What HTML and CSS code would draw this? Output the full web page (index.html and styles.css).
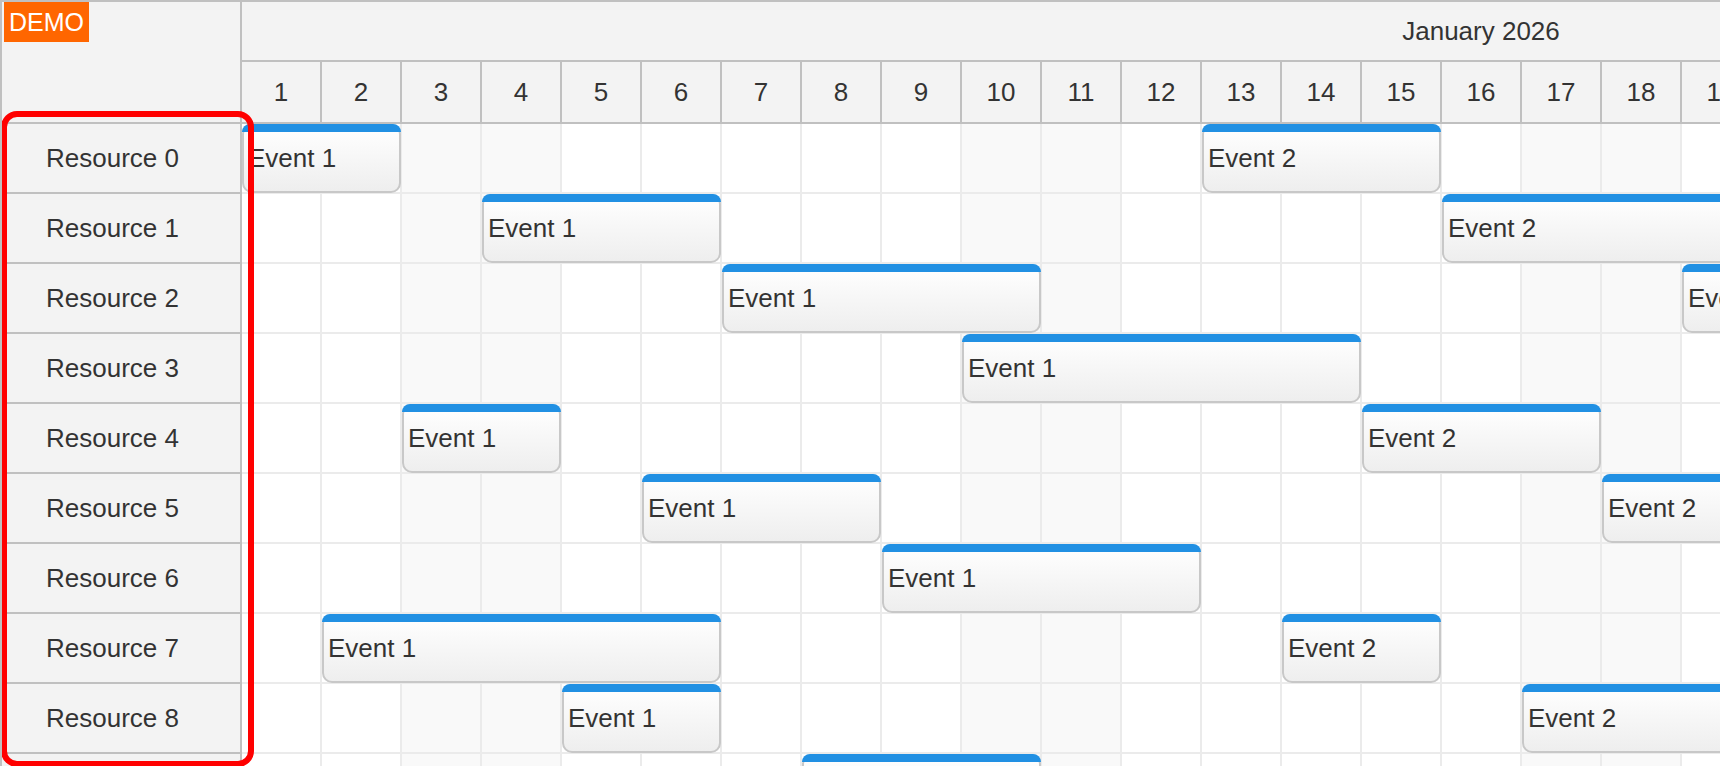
FILE: index.html
```html
<!DOCTYPE html>
<html>
<head>
<meta charset="utf-8">
<title>Scheduler</title>
<link rel="stylesheet" href="styles.css">
</head>
<body>
<div class="scheduler">
  <div class="corner"><span class="demo">DEMO</span></div>
  <div class="timeheader">
    <div class="month-row"><div class="month">January 2026</div></div>
    <div class="day-row">
      <div class="day">1</div><div class="day">2</div><div class="day">3</div><div class="day">4</div>
      <div class="day">5</div><div class="day">6</div><div class="day">7</div><div class="day">8</div>
      <div class="day">9</div><div class="day">10</div><div class="day">11</div><div class="day">12</div>
      <div class="day">13</div><div class="day">14</div><div class="day">15</div><div class="day">16</div>
      <div class="day">17</div><div class="day">18</div><div class="day">19</div><div class="day">20</div>
      <div class="day">21</div><div class="day">22</div>
    </div>
  </div>
  <div class="rowheader">
    <div class="res">Resource 0</div>
    <div class="res">Resource 1</div>
    <div class="res">Resource 2</div>
    <div class="res">Resource 3</div>
    <div class="res">Resource 4</div>
    <div class="res">Resource 5</div>
    <div class="res">Resource 6</div>
    <div class="res">Resource 7</div>
    <div class="res">Resource 8</div>
    <div class="res">Resource 9</div>
  </div>
  <div class="grid">
    <div class="row">
      <div class="event" style="left:0px;width:159px">Event 1</div>
      <div class="event" style="left:960px;width:239px">Event 2</div>
    </div>
    <div class="row">
      <div class="event" style="left:240px;width:239px">Event 1</div>
      <div class="event" style="left:1200px;width:399px">Event 2</div>
    </div>
    <div class="row">
      <div class="event" style="left:480px;width:319px">Event 1</div>
      <div class="event" style="left:1440px;width:319px">Event 2</div>
    </div>
    <div class="row">
      <div class="event" style="left:720px;width:399px">Event 1</div>
    </div>
    <div class="row">
      <div class="event" style="left:160px;width:159px">Event 1</div>
      <div class="event" style="left:1120px;width:239px">Event 2</div>
    </div>
    <div class="row">
      <div class="event" style="left:400px;width:239px">Event 1</div>
      <div class="event" style="left:1360px;width:319px">Event 2</div>
    </div>
    <div class="row">
      <div class="event" style="left:640px;width:319px">Event 1</div>
    </div>
    <div class="row">
      <div class="event" style="left:80px;width:399px">Event 1</div>
      <div class="event" style="left:1040px;width:159px">Event 2</div>
    </div>
    <div class="row">
      <div class="event" style="left:320px;width:159px">Event 1</div>
      <div class="event" style="left:1280px;width:319px">Event 2</div>
    </div>
    <div class="row">
      <div class="event" style="left:560px;width:239px">Event 1</div>
    </div>
  </div>
  <div class="highlight"></div>
</div>
</body>
</html>
```
FILE: styles.css
```css
html, body {
  margin: 0;
  padding: 0;
  background: #ffffff;
}
body {
  font-family: "Liberation Sans", Arial, sans-serif;
  font-size: 26px;
  color: #333333;
}
.scheduler {
  position: relative;
  box-sizing: border-box;
  width: 1720px;
  height: 766px;
  overflow: hidden;
  border-top: 2px solid #c0c0c0;
  border-left: 2px solid #c0c0c0;
  display: grid;
  grid-template-columns: 240px minmax(0, 1fr);
  grid-template-rows: 122px minmax(0, 1fr);
}
.corner {
  position: relative;
  box-sizing: border-box;
  background: #f3f3f3;
  border-right: 2px solid #c0c0c0;
  border-bottom: 2px solid #c0c0c0;
}
.demo {
  position: absolute;
  left: 2px;
  top: 0;
  height: 40px;
  line-height: 40px;
  padding: 0 5px;
  background: #ff6600;
  color: #ffffff;
  font-size: 25px;
}
.timeheader {
  overflow: hidden;
  background: #f3f3f3;
}
.month-row {
  box-sizing: border-box;
  height: 60px;
  border-bottom: 2px solid #c0c0c0;
  display: flex;
}
.month {
  flex: 0 0 2480px;
  box-sizing: border-box;
  border-right: 2px solid #c0c0c0;
  display: flex;
  align-items: center;
  justify-content: center;
}
.day-row {
  box-sizing: border-box;
  height: 62px;
  border-bottom: 2px solid #c0c0c0;
  display: flex;
}
.day {
  flex: 0 0 80px;
  box-sizing: border-box;
  border-right: 2px solid #c0c0c0;
  display: flex;
  align-items: center;
  justify-content: center;
}
.rowheader {
  overflow: hidden;
}
.res {
  box-sizing: border-box;
  height: 70px;
  padding-left: 44px;
  background: #f3f3f3;
  border-right: 2px solid #c0c0c0;
  border-bottom: 2px solid #c0c0c0;
  display: flex;
  align-items: center;
  white-space: nowrap;
}
.grid {
  overflow: hidden;
}
.row {
  position: relative;
  box-sizing: border-box;
  width: 2480px;
  height: 70px;
  border-bottom: 2px solid #ebebeb;
  background:
    repeating-linear-gradient(to right, transparent 0 78px, #ebebeb 78px 80px),
    repeating-linear-gradient(to right, #ffffff 0 160px, #f9f9f9 160px 320px, #ffffff 320px 560px);
}
.event {
  position: absolute;
  top: 0;
  height: 69px;
  box-sizing: border-box;
  border: 2px solid #c8c8c8;
  border-radius: 10px;
  background: linear-gradient(to bottom, #ffffff, #eeeeee);
  padding-left: 4px;
  display: flex;
  align-items: center;
  white-space: nowrap;
  color: #333333;
}
.event::before {
  content: "";
  position: absolute;
  top: -2px;
  left: -2px;
  right: -2px;
  height: 8px;
  border-radius: 10px 10px 0 0;
  background: #2190e3;
}
.highlight {
  position: absolute;
  left: -1px;
  top: 109px;
  width: 253px;
  height: 656px;
  box-sizing: border-box;
  border: 6px solid #ff0000;
  border-radius: 16px;
  pointer-events: none;
}
```
